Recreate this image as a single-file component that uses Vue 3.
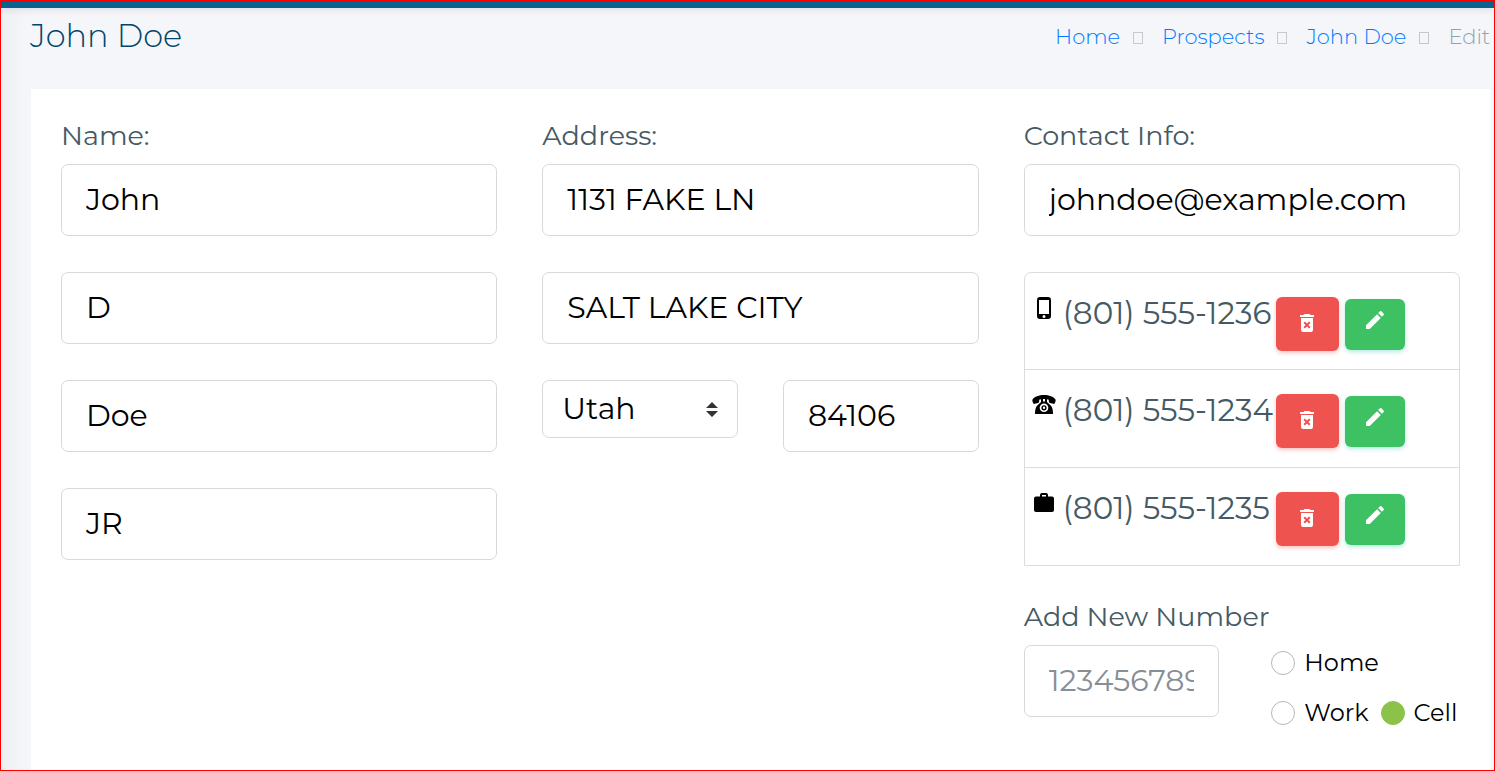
<script setup>
import { ref } from 'vue'

const crumbs = ['Home', 'Prospects', 'John Doe']
const names = ref([
  { label: 'First name', value: 'John' },
  { label: 'Middle name', value: 'D' },
  { label: 'Last name', value: 'Doe' },
  { label: 'Suffix', value: 'JR' },
])
const street = ref('1131 FAKE LN')
const city = ref('SALT LAKE CITY')
const state = ref('Utah')
const zip = ref('84106')
const email = ref('johndoe@example.com')
const newNumber = ref('')
const numberType = ref('Cell')
const phones = [
  { kind: 'cell', number: '(801) 555-1236' },
  { kind: 'home', number: '(801) 555-1234' },
  { kind: 'work', number: '(801) 555-1235' },
]
</script>

<template>
  <div class="page">
    <div class="topbar"></div>
    <header class="heading">
      <h1>John Doe</h1>
      <nav class="crumbs" aria-label="Breadcrumb">
        <template v-for="c in crumbs" :key="c">
          <a href="#">{{ c }}</a>
          <span class="sep"></span>
        </template>
        <span class="current">Edit</span>
      </nav>
    </header>

    <main class="card">
      <section class="column">
        <h2>Name:</h2>
        <div class="stack">
          <input v-for="n in names" :key="n.label" v-model="n.value" class="field" type="text" :aria-label="n.label" />
        </div>
      </section>

      <section class="column">
        <h2>Address:</h2>
        <div class="stack">
          <input v-model="street" class="field" type="text" aria-label="Street" />
          <input v-model="city" class="field" type="text" aria-label="City" />
          <div class="pair">
            <div class="picker">
              <select v-model="state" aria-label="State">
                <option>Utah</option>
              </select>
              <svg class="arrows" viewBox="0 0 12 15" aria-hidden="true">
                <path d="M6 0l6 6H0zM6 15l6-6H0z" />
              </svg>
            </div>
            <input v-model="zip" class="field" type="text" aria-label="Zip code" />
          </div>
        </div>
      </section>

      <section class="column">
        <h2>Contact Info:</h2>
        <div class="stack">
          <input v-model="email" class="field" type="email" aria-label="Email" />
          <ul class="phones">
            <li v-for="p in phones" :key="p.kind">
              <svg v-if="p.kind === 'cell'" class="kind" viewBox="0 0 24 24" aria-hidden="true">
                <path fill-rule="evenodd" d="M8 1h8a3 3 0 0 1 3 3v16a3 3 0 0 1-3 3H8a3 3 0 0 1-3-3V4a3 3 0 0 1 3-3zM7 4v14h10V4zM12 19a1.500 1.500 0 1 0 0 3 1.500 1.500 0 0 0 0-3z" />
              </svg>
              <svg v-else-if="p.kind === 'home'" class="kind" viewBox="0 0 24 24" aria-hidden="true">
                <path fill-rule="evenodd" d="M12 2C7 2 2.500 3.500.500 6.500c-.500 1.200.300 3 1.200 4.500l4.300-1c.700-.200 1.200-.700 1.200-1.400V6.700L9 6.200V9l-4.200 4C3.500 14.800 3 17 3 21h18c0-4-.500-6.200-1.800-8L15 9V6.200l1.800.5v1.900c0 .700.500 1.200 1.200 1.400l4.300 1c.900-1.500 1.700-3.300 1.200-4.500C21.500 3.500 17 2 12 2zM11 6h2v2.500h-2zM12 10.500a4.300 4.300 0 1 1 0 8.600 4.300 4.300 0 0 1 0-8.600zm0 1.700a2.600 2.600 0 1 0 0 5.200 2.600 2.600 0 0 0 0-5.200zm0 1.400a1.200 1.200 0 1 1 0 2.400 1.200 1.200 0 0 1 0-2.400z" />
              </svg>
              <svg v-else class="kind" viewBox="0 0 24 24" aria-hidden="true">
                <path fill-rule="evenodd" d="M10 2h4a2 2 0 0 1 2 2v1.500h4a2 2 0 0 1 2 2V19a2 2 0 0 1-2 2H4a2 2 0 0 1-2-2V7.500a2 2 0 0 1 2-2h4V4a2 2 0 0 1 2-2zm0 2v1.500h4V4z" />
              </svg>
              <span class="number">{{ p.number }}</span>
              <button type="button" class="action remove" :aria-label="'Delete ' + p.number">
                <svg viewBox="0 0 24 24" aria-hidden="true">
                  <path fill-rule="evenodd" d="M15.500 4H19v2H5V4h3.500l1-1h5zM6 7h12v12a2 2 0 0 1-2 2H8a2 2 0 0 1-2-2zm2.460 4.880L10.590 14l-2.120 2.120 1.410 1.410L12 15.410l2.120 2.120 1.410-1.410L13.410 14l2.120-2.120-1.410-1.410L12 12.590l-2.120-2.120z" />
                </svg>
              </button>
              <button type="button" class="action edit" :aria-label="'Edit ' + p.number">
                <svg viewBox="0 0 24 24" aria-hidden="true">
                  <path d="M3 17.250V21h3.750L17.810 9.940l-3.750-3.750zM20.710 7.040a1 1 0 0 0 0-1.410l-2.340-2.340a1 1 0 0 0-1.410 0l-1.830 1.830 3.750 3.750z" />
                </svg>
              </button>
            </li>
          </ul>
        </div>

        <div class="add">
          <label class="title" for="new-number">Add New Number</label>
          <div class="pair">
            <input id="new-number" v-model="newNumber" class="field" type="tel" placeholder="1234567890" />
            <div class="types">
              <label v-for="t in ['Home', 'Work', 'Cell']" :key="t">
                <input v-model="numberType" type="radio" name="type" :value="t" />{{ t }}
              </label>
            </div>
          </div>
        </div>
      </section>
    </main>
  </div>
</template>

<style>
body {
  margin: 0;
}
</style>

<style scoped>
.page,
.page * {
  box-sizing: border-box;
}
.page {
  display: flex;
  flex-direction: column;
  min-height: 100vh;
  border: 1px solid #f00;
  background: linear-gradient(90deg, #eeeff3, #f4f6fa 24px);
  color: #455a64;
  font-family: Montserrat, Inter, "Open Sans", sans-serif;
  font-weight: 400;
}
.topbar {
  height: 7px;
  background: #0a6291;
  box-shadow: 0 1px 8px rgba(0, 0, 0, 0.12);
}
.heading {
  display: flex;
  justify-content: space-between;
  align-items: flex-start;
  padding: 8px 4px 33px 29px;
}
h1,
h2 {
  margin: 0;
  font-weight: 400;
}
h1 {
  color: #01466b;
  font-size: 32px;
  font-weight: 300;
  line-height: 40px;
}
.crumbs {
  display: flex;
  align-items: center;
  font-size: 21px;
  font-weight: 300;
  line-height: 42px;
}
.crumbs a {
  color: #007bff;
  text-decoration: none;
}
.current {
  color: #90a4ae;
}
.sep {
  width: 10px;
  height: 12px;
  margin: 2px 19px 0 13px;
  border: 1px solid #c3c9cf;
}
.card {
  display: grid;
  grid-template-columns: repeat(3, minmax(0, 1fr));
  gap: 45px;
  flex: 1;
  margin: -2px 3px 0 30px;
  padding: 29px 31px 30px 30px;
  background: #fff;
}
h2,
.title {
  display: block;
  margin-bottom: 10px;
  font-size: 27px;
  line-height: 36px;
}
.stack {
  display: flex;
  flex-direction: column;
  gap: 36px;
}
.field {
  width: 100%;
  min-width: 0;
  height: 72px;
  padding: 0 24px 2px;
  border: 1px solid #d9d9d9;
  border-radius: 7px;
  background: #fff;
  color: #000;
  font: inherit;
  font-size: 30px;
}
.field::placeholder {
  color: #868e96;
  opacity: 1;
}
.pair {
  display: grid;
  grid-template-columns: repeat(2, minmax(0, 1fr));
  align-items: start;
  gap: 45px;
}
.picker {
  display: grid;
  align-items: center;
}
.picker > * {
  grid-area: 1 / 1;
}
.picker select {
  width: 100%;
  height: 58px;
  padding: 0 40px 2px 19px;
  border: 1px solid #d9d9d9;
  border-radius: 7px;
  background: #fff;
  color: #000;
  font: inherit;
  font-size: 30px;
  appearance: none;
}
.arrows {
  justify-self: end;
  width: 12px;
  height: 15px;
  margin-right: 20px;
  fill: #333;
  pointer-events: none;
}
.phones {
  margin: 0;
  padding: 0;
  border: 1px solid #dcdcdc;
  border-radius: 7px 7px 0 0;
  list-style: none;
}
.phones li {
  display: flex;
  align-items: flex-start;
  height: 96px;
  padding: 23px 7px 0;
}
.phones li + li {
  height: 98px;
  border-top: 1px solid #dcdcdc;
}
.kind {
  flex: none;
  width: 24px;
  height: 24px;
  margin-right: 7px;
}
.number {
  flex: none;
  width: 213px;
  font-size: 31px;
  line-height: 34px;
  white-space: nowrap;
}
.action {
  display: flex;
  flex: none;
  justify-content: center;
  align-items: center;
  padding: 0 0 2px;
  border: 0;
  border-radius: 6px;
}
.action svg {
  width: 24px;
  height: 24px;
  fill: #fff;
}
.remove {
  width: 63px;
  height: 54px;
  margin-top: 1px;
  background: #ef5350;
  box-shadow: 0 2px 4px rgba(239, 83, 80, 0.35);
}
.edit {
  width: 60px;
  height: 51px;
  margin: 3px 0 0 6px;
  padding-bottom: 10px;
  background: #3ec162;
  box-shadow: 0 2px 4px rgba(38, 198, 180, 0.35);
}
.add {
  margin-top: 33px;
}
.types {
  display: flex;
  flex-wrap: wrap;
  gap: 14px 12px;
  margin: 0 -7px 0 7px;
  color: #000;
  font-size: 24px;
  line-height: 36px;
}
.types label {
  display: flex;
  align-items: center;
}
.types label:first-child {
  width: 100%;
}
.types input {
  flex: none;
  width: 24px;
  height: 24px;
  margin: 0 9px 0 0;
  border: 1px solid #b0b8bc;
  border-radius: 50%;
  background: #fff;
  appearance: none;
}
.types input:checked {
  border-color: #8bc34a;
  background: #8bc34a;
}
</style>
